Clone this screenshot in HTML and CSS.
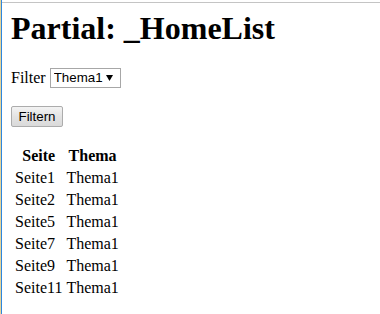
FILE: index.html
```html
<!DOCTYPE html>
<html>
<head>
<meta charset="utf-8">
<title>Partial: _HomeList</title>
<link rel="stylesheet" href="styles.css">
</head>
<body>
<div class="window">
  <div class="pane">
    <div class="page">
      <h1 class="title">Partial: _HomeList</h1>
      <form class="filter-form">
        <div class="filter-row">
          <label class="filter-label" for="thema">Filter</label>
          <span class="select-wrap">
            <select id="thema" class="select">
              <option>Thema1</option>
            </select>
            <svg class="select-arrow" width="7" height="6" viewBox="0 0 7 6"><path d="M0 0H7L3.5 6Z" fill="#000"/></svg>
          </span>
        </div>
        <button type="button" class="btn">Filtern</button>
      </form>
      <table class="list">
        <thead>
          <tr><th>Seite</th><th>Thema</th></tr>
        </thead>
        <tbody>
          <tr><td>Seite1</td><td>Thema1</td></tr>
          <tr><td>Seite2</td><td>Thema1</td></tr>
          <tr><td>Seite5</td><td>Thema1</td></tr>
          <tr><td>Seite7</td><td>Thema1</td></tr>
          <tr><td>Seite9</td><td>Thema1</td></tr>
          <tr><td>Seite11</td><td>Thema1</td></tr>
        </tbody>
      </table>
    </div>
  </div>
</div>
</body>
</html>
```

FILE: styles.css
```css
html, body {
  margin: 0;
  padding: 0;
  background: #fff;
}
body {
  font-family: "Liberation Serif", "Times New Roman", serif;
  font-size: 16px;
  color: #000;
}
.window {
  min-height: 100vh;
  box-sizing: border-box;
  border-left: 1px solid #e4d49a;
  display: flex;
}
.pane {
  flex: 1;
  border-left: 1px solid #2f86dd;
}
.page {
  margin-top: 2px;
  border-top: 1px solid #c4c4c4;
  padding: 7px 0 0 9px;
}
.title {
  font-size: 32px;
  font-weight: bold;
  margin: 0 0 21px;
  line-height: 37px;
}
.filter-form {
  display: flex;
  flex-direction: column;
  align-items: flex-start;
}
.filter-row {
  display: flex;
  align-items: center;
  gap: 4px;
  height: 20px;
}
.filter-label {
  line-height: 20px;
}
.select-wrap {
  position: relative;
  display: inline-flex;
}
.select {
  appearance: none;
  -webkit-appearance: none;
  width: 71px;
  height: 20px;
  box-sizing: border-box;
  border: 1px solid #a7a7a7;
  border-radius: 0;
  background: #fff;
  color: #000;
  font-family: "Liberation Sans", Arial, sans-serif;
  font-size: 13.33px;
  padding: 0 0 0 3px;
  margin: 0;
  line-height: 18px;
}
.select-arrow {
  position: absolute;
  left: 56px;
  top: 7px;
  pointer-events: none;
}
.btn {
  margin-top: 18px;
  height: 21px;
  width: 52px;
  box-sizing: border-box;
  border: 1px solid #acacac;
  border-radius: 2px;
  background: linear-gradient(#f3f3f3, #e3e3e3 50%, #dadada);
  font-family: "Liberation Sans", Arial, sans-serif;
  font-size: 13.33px;
  color: #000;
  padding: 0;
}
.list {
  margin: 17px 0 0 1px;
  border-collapse: separate;
  border-spacing: 2px;
}
.list th,
.list td {
  padding: 1px;
  line-height: 18px;
}
.list th {
  font-weight: bold;
  text-align: center;
}
.list td {
  text-align: left;
}
```
